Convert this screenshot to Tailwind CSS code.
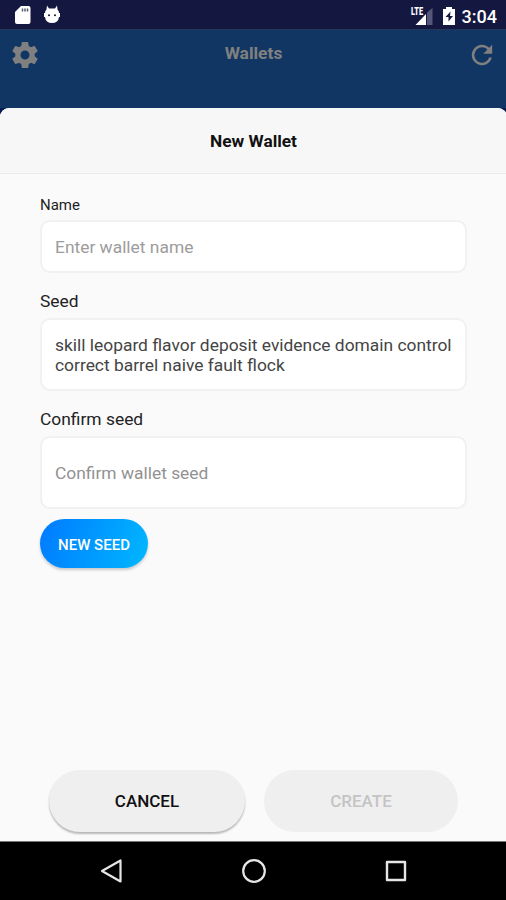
<!DOCTYPE html>
<html lang="en">
<head>
<meta charset="utf-8">
<title>New Wallet</title>
<script src="https://cdn.jsdelivr.net/npm/@tailwindcss/browser@4"></script>
</head>
<body class="w-[506px] h-[900px] overflow-hidden bg-[#123663] font-[Roboto,sans-serif]">
<div class="flex h-[900px] flex-col">
  <header class="flex h-[29px] shrink-0 items-center bg-[#14173f] pl-[14px] pr-[9px] text-white">
    <svg class="mt-[1px] h-5 w-[18px]" viewBox="0 0 18 20"><path fill="#fff" d="M7 1h7.500q2 0 2 2v14q0 2-2 2H3q-2 0-2-2V7z"/><path stroke="#555a70" stroke-width="1.500" d="M8.500 3.500v3M11 3.500v3M13.500 3.500v3"/></svg>
    <svg class="ml-[10px] h-5 w-5" viewBox="0 0 20 20"><path fill="#fff" d="M5 .5 7 3.500h6l2-3 .5 4q1.500 1 1.500 3.500h1v4h-1q-.7 6-7 6t-7-6H2V8h1q0-2.500 1.500-3.500z"/><circle cx="7" cy="10.300" r="1" fill="#14173f"/><circle cx="13" cy="10.300" r="1" fill="#14173f"/></svg>
    <div class="ml-auto flex items-center">
      <svg class="mt-[2px] h-[22px] w-6" viewBox="0 0 24 22"><path fill="#55577a" d="M17 7.500 22.500 3v17H17z"/><path fill="#fff" d="M5.500 20 16 9v11z"/><text x="1" y="10" font-family="Roboto" font-size="10.500" font-weight="900" fill="#fff" textLength="12" lengthAdjust="spacingAndGlyphs">LTE</text></svg>
      <svg class="ml-[8px] mt-[2px] h-5 w-[14px]" viewBox="0 0 14 20"><path fill="#fff" d="M4 1h6v2h3v16H1V3h3z"/><path fill="#14173f" d="M8.500 5.500 3.500 11h3v4.500L11 10H8z"/></svg>
      <span class="ml-[6px] mt-[4px] text-[18px] leading-5 font-medium">3:04</span>
    </div>
  </header>
  <div class="flex h-[79px] shrink-0 items-start justify-between border-t border-[#243859] bg-[#123663] pl-[11px] pr-[10px] text-[#808080]">
    <svg class="mt-[11px] h-7 w-7" viewBox="1.200 1.200 21.600 21.600" fill="currentColor"><path d="M19.430 12.980c.04-.32.07-.64.07-.98s-.03-.66-.07-.98l2.110-1.650c.19-.15.24-.42.12-.64l-2-3.460c-.12-.22-.39-.3-.61-.22l-2.490 1c-.52-.4-1.080-.73-1.690-.98l-.38-2.650A.49.490 0 0 0 14 2h-4c-.25 0-.46.18-.49.42l-.38 2.650c-.61.25-1.170.59-1.690.98l-2.490-1c-.23-.09-.49 0-.61.22l-2 3.460c-.13.22-.07.49.12.64l2.110 1.650c-.04.32-.07.65-.07.98s.03.66.07.98l-2.110 1.650c-.19.15-.24.42-.12.64l2 3.460c.12.22.39.3.61.22l2.490-1c.52.4 1.080.73 1.690.98l.38 2.650c.03.24.24.42.49.42h4c.25 0 .46-.18.49-.42l.38-2.650c.61-.25 1.170-.59 1.690-.98l2.490 1c.23.09.49 0 .61-.22l2-3.460c.12-.22.07-.49-.12-.64zM12 15.500a3.500 3.500 0 1 1 0-7 3.500 3.500 0 0 1 0 7z"/></svg>
    <h2 class="mt-[11px] text-[17.400px] leading-6 font-bold">Wallets</h2>
    <svg class="mt-[11px] h-7 w-7" viewBox="1 1 22 22" fill="currentColor"><path d="M17.650 6.350A8 8 0 1 0 19.730 14h-2.080A6 6 0 1 1 12 6c1.660 0 3.140.69 4.220 1.780L13 11h7V4z"/></svg>
  </div>
  <div class="flex grow bg-[#071c55]">
  <section class="flex grow flex-col rounded-t-[9px] bg-[#fafafa]">
    <div class="flex h-[66px] items-center justify-center rounded-t-[9px] border-b border-[#ececec] bg-[#f7f7f7]">
      <h1 class="text-[17.300px] leading-6 font-bold text-[#111]">New Wallet</h1>
    </div>
    <form class="flex flex-col items-start px-10 pt-[21px] text-[17.400px] text-[#222]">
      <label class="h-[25px] text-[15px] leading-5">Name</label>
      <div class="flex h-[53px] w-[427px] items-center rounded-[10px] border-2 border-[#f1f1f1] bg-white px-[13px] pt-[2px] text-[#9c9c9c]">Enter wallet name</div>
      <label class="mt-[18px] h-[27px] leading-5">Seed</label>
      <div class="h-[73px] w-[427px] rounded-[10px] border-2 border-[#f1f1f1] bg-white px-[13px] pt-[15px] leading-5 whitespace-nowrap text-[#444]">skill leopard flavor deposit evidence domain control<br>correct barrel naive fault flock</div>
      <label class="mt-[18px] h-[27px] leading-5">Confirm seed</label>
      <div class="flex h-[73px] w-[427px] items-center rounded-[10px] border-2 border-[#f1f1f1] bg-white px-[13px] pt-[2px] text-[#929292]">Confirm wallet seed</div>
      <button type="button" class="mt-[10px] h-[49px] w-[108px] rounded-full bg-linear-[110deg,#007aff,#00b8ff] pt-[3px] text-[15px] font-medium text-white shadow-[0_2px_3px_#0003]">NEW SEED</button>
    </form>
    <div class="mt-auto flex h-[71px] gap-[19px] pl-[49px] text-[17px] font-medium">
      <button class="h-[62px] w-[196px] rounded-full bg-[#efefef] pt-[1px] text-[#111] shadow-[0_2px_2px_#0004]">CANCEL</button>
      <button class="h-[62px] w-[194px] rounded-full bg-[#efefef] pt-[1px] text-[#c4c4c4]">CREATE</button>
    </div>
  </section>
  </div>
  <nav class="flex h-[59px] shrink-0 items-center border-t border-[#777] bg-black pl-[100px] gap-[118px]">
    <svg class="h-6 w-6" viewBox="0 0 24 24" fill="none" stroke="#e6e6e6" stroke-width="2.200" stroke-linejoin="round"><path d="M20.500 1.500v21L2 12z"/></svg>
    <svg class="h-6 w-6" viewBox="0 0 24 24" fill="none" stroke="#e6e6e6" stroke-width="2.200"><circle cx="12" cy="12" r="10.800"/></svg>
    <svg class="h-6 w-6" viewBox="0 0 24 24" fill="none" stroke="#e6e6e6" stroke-width="2.400" stroke-linejoin="round"><path d="M3 3h18v18H3z"/></svg>
  </nav>
</div>
</body>
</html>
